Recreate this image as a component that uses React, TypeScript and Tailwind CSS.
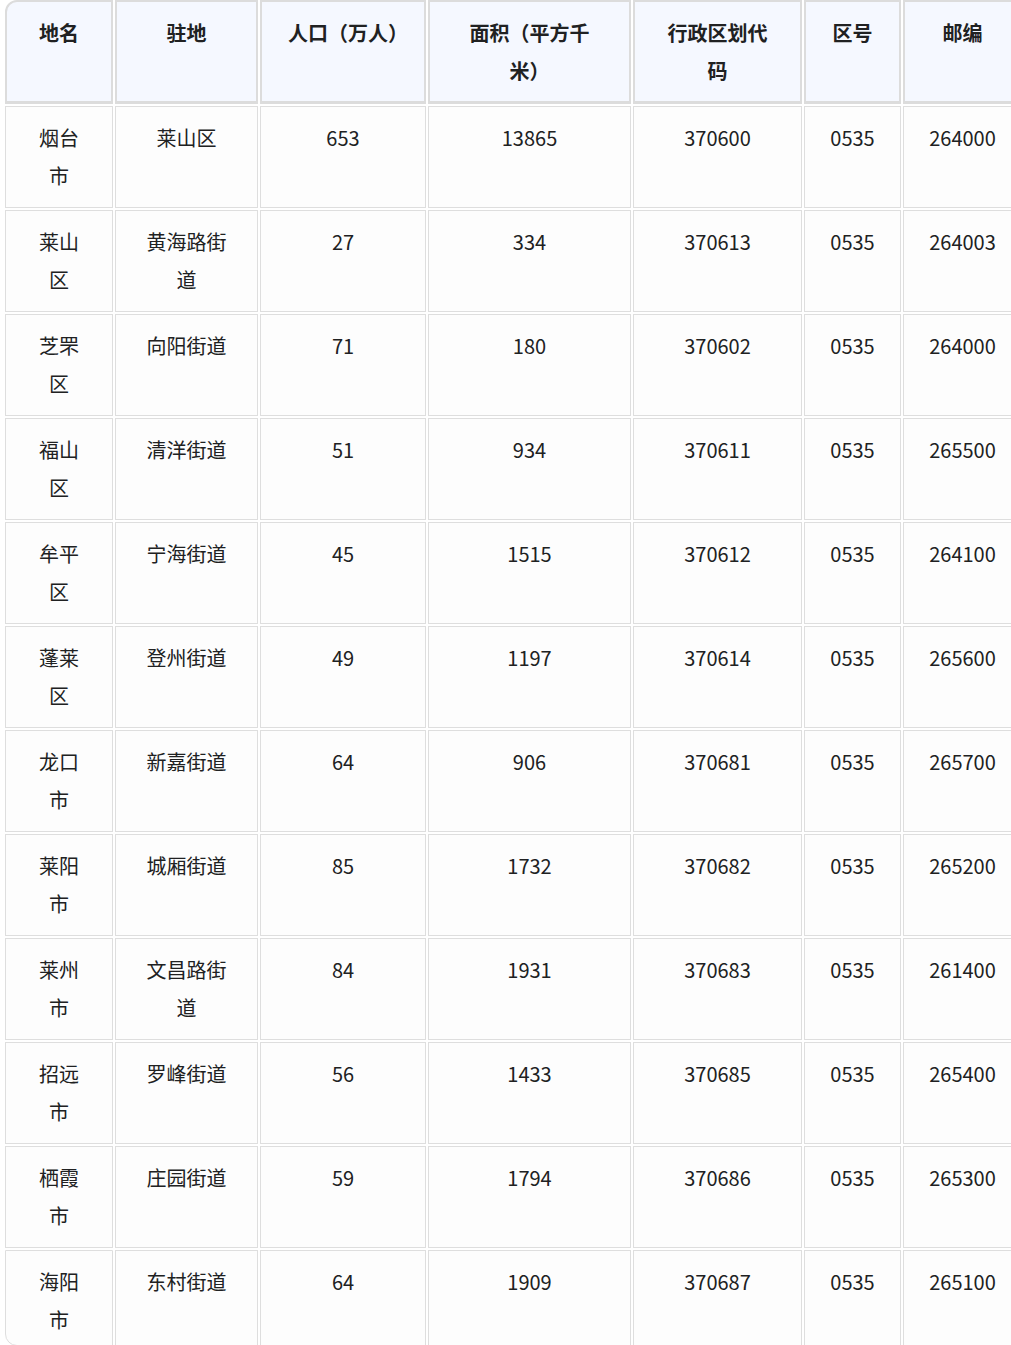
import type { ReactNode } from "react";

const headers: ReactNode[] = [
    "地名",
    "驻地",
    <>
        人口（万人<span className="[font-feature-settings:'halt']">）</span>
    </>,
    "面积（平方千米）",
    "行政区划代码",
    "区号",
    "邮编",
];

// max width of the text block in each column, so lines wrap where the picture wraps
const wrap = ["max-w-[50px]", "max-w-[90px]", "max-w-none", "max-w-[130px]", "max-w-[110px]", "max-w-none", "max-w-none"];

const rows = [
    ["烟台市", "莱山区", "653", "13865", "370600", "0535", "264000"],
    ["莱山区", "黄海路街道", "27", "334", "370613", "0535", "264003"],
    ["芝罘区", "向阳街道", "71", "180", "370602", "0535", "264000"],
    ["福山区", "清洋街道", "51", "934", "370611", "0535", "265500"],
    ["牟平区", "宁海街道", "45", "1515", "370612", "0535", "264100"],
    ["蓬莱区", "登州街道", "49", "1197", "370614", "0535", "265600"],
    ["龙口市", "新嘉街道", "64", "906", "370681", "0535", "265700"],
    ["莱阳市", "城厢街道", "85", "1732", "370682", "0535", "265200"],
    ["莱州市", "文昌路街道", "84", "1931", "370683", "0535", "261400"],
    ["招远市", "罗峰街道", "56", "1433", "370685", "0535", "265400"],
    ["栖霞市", "庄园街道", "59", "1794", "370686", "0535", "265300"],
    ["海阳市", "东村街道", "64", "1909", "370687", "0535", "265100"],
];

export default function App() {
    return (
        <div
            className="w-full h-[1345px] overflow-hidden bg-white text-[#202122] text-[20px] leading-[38px]"
            style={{ fontFamily: '"Noto Sans CJK SC", "Noto Sans", sans-serif' }}
        >
            <div className="ml-[5px] w-[1030px] grid grid-cols-[108px_143px_166px_203px_169px_97px_119px] gap-[2px]">
                {headers.map((h, i) => (
                    <div
                        key={i}
                        className={
                            "h-[104px] bg-[#f5f8ff] border-2 border-b-[3px] border-[#dcdcdc] px-1 pt-3 text-center font-bold " +
                            (i === 0 ? "rounded-tl-[12px]" : "")
                        }
                    >
                        <div className={"mx-auto " + wrap[i]}>{h}</div>
                    </div>
                ))}

                {rows.map((r, ri) =>
                    r.map((v, ci) => (
                        <div
                            key={ri + "-" + ci}
                            className={
                                "bg-[#fdfdfd] border border-[#dedede] px-1 pt-3 text-center " +
                                (ri === rows.length - 1 ? "h-[96px] " : "h-[102px] ") +
                                (ri === rows.length - 1 && ci === 0 ? "rounded-bl-[12px]" : "")
                            }
                        >
                            <div className={"mx-auto " + wrap[ci]}>{v}</div>
                        </div>
                    ))
                )}
            </div>
        </div>
    );
}
